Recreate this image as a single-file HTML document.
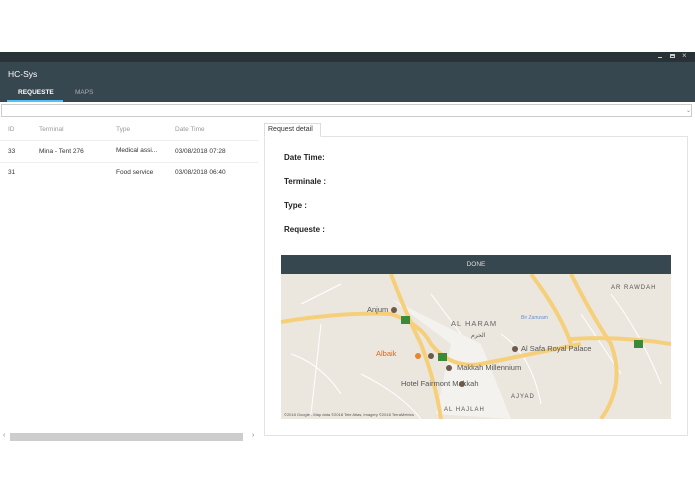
<!DOCTYPE html>
<html><head><style>
body{margin:0;width:695px;height:494px;background:#fff;font-family:"Liberation Sans",sans-serif;position:relative;overflow:hidden}
.a{position:absolute}
.lbl{font-size:8px;font-weight:bold;color:#222}
.th{font-size:6.5px;color:#999}
.td{font-size:6.5px;color:#333}
</style></head><body>
<div class="a" style="left:0;top:52px;width:695px;height:10px;background:#283237"></div>
<div class="a" style="left:658px;top:57px;width:4px;height:1px;background:#ccc"></div>
<div class="a" style="left:670px;top:54px;width:5px;height:4px;border:1px solid #ccc;border-top-width:2px;box-sizing:border-box"></div>
<div class="a" style="left:682px;top:51px;font-size:8px;color:#ccc">×</div>
<div class="a" style="left:0;top:62px;width:695px;height:40px;background:#37474f"></div>
<div class="a" style="left:8px;top:69px;font-size:8.5px;color:#fff">HC-Sys</div>
<div class="a" style="left:18px;top:89px;font-size:6.5px;color:#fff;font-weight:bold">REQUESTE</div>
<div class="a" style="left:75px;top:89px;font-size:6.5px;color:#aab">MAPS</div>
<div class="a" style="left:7px;top:100px;width:56px;height:2px;background:#4fc3f7"></div>
<div class="a" style="left:1px;top:104px;width:691px;height:13px;border:1px solid #ccc;box-sizing:border-box"></div>
<div class="a" style="left:686px;top:107px;font-size:6px;color:#888">⌄</div>
<div class="a th" style="left:8px;top:126px">ID</div>
<div class="a th" style="left:39px;top:126px">Terminal</div>
<div class="a th" style="left:116px;top:126px">Type</div>
<div class="a th" style="left:175px;top:126px">Date Time</div>
<div class="a" style="left:0;top:140px;width:258px;height:1px;background:#eee"></div>
<div class="a td" style="left:8px;top:148px">33</div>
<div class="a td" style="left:39px;top:148px">Mina - Tent 276</div>
<div class="a td" style="left:116px;top:147px">Medical assi...</div>
<div class="a td" style="left:175px;top:148px">03/08/2018 07:28</div>
<div class="a" style="left:0;top:162px;width:258px;height:1px;background:#eee"></div>
<div class="a td" style="left:8px;top:169px">31</div>
<div class="a td" style="left:116px;top:169px">Food service</div>
<div class="a td" style="left:175px;top:169px">03/08/2018 06:40</div>
<div class="a" style="left:3px;top:432px;font-size:7px;color:#777">‹</div>
<div class="a" style="left:10px;top:433px;width:233px;height:8px;background:#cdcdcd"></div>
<div class="a" style="left:252px;top:432px;font-size:7px;color:#777">›</div>
<div class="a" style="left:264px;top:136px;width:424px;height:300px;border:1px solid #e3e3e3;box-sizing:border-box"></div>
<div class="a" style="left:264px;top:123px;width:57px;height:14px;border:1px solid #ddd;border-bottom:1px solid #fff;background:#fff;box-sizing:border-box;font-size:7px;color:#333;padding:2px 0 0 3px">Request detail</div>
<div class="a lbl" style="left:284px;top:153px">Date Time:</div>
<div class="a lbl" style="left:284px;top:177px">Terminale :</div>
<div class="a lbl" style="left:284px;top:201px">Type :</div>
<div class="a lbl" style="left:284px;top:225px">Requeste :</div>
<div class="a" style="left:281px;top:255px;width:390px;height:19px;background:#37474f;color:#ddd;font-size:6.5px;text-align:center;line-height:19px">DONE</div>
<svg class="a" style="left:281px;top:274px" width="390" height="145" viewBox="0 0 390 145">
<rect width="390" height="145" fill="#ebe7df"/>
<g fill="none" stroke="#fff" stroke-width="1">
<path d="M20 30 L60 10 M10 80 Q40 90 60 120 M150 20 L180 60 M220 60 Q250 80 260 130 M300 40 L340 100 M330 20 Q360 60 380 110 M80 100 Q120 120 140 145 M40 50 L30 140"/>
</g>
<path d="M110 25 L170 70 L155 140 L230 145 L200 70" fill="#f4f2ee" stroke="none"/>
<g fill="none" stroke="#f6cf7a" stroke-width="4">
<path d="M0 48 Q60 38 110 40 Q140 50 150 70 Q170 95 200 90 Q250 80 300 70"/>
<path d="M110 0 Q125 40 140 70 Q155 110 160 145"/>
<path d="M290 0 Q310 40 330 70 Q345 110 320 145"/>
<path d="M250 0 Q280 40 290 70"/>
<path d="M290 65 Q340 62 390 70"/>
</g>
<g font-family="Liberation Sans,sans-serif" font-size="7.5" fill="#555">
<text x="86" y="38">Anjum</text>
<text x="170" y="52" fill="#666" letter-spacing="1">AL HARAM</text>
<text x="190" y="63" font-size="6">الحرم</text>
<text x="240" y="77">Al Safa Royal Palace</text>
<text x="95" y="82" fill="#d2691e">Albaik</text>
<text x="176" y="96">Makkah Millennium</text>
<text x="120" y="112">Hotel Fairmont Makkah</text>
<text x="230" y="124" font-size="6" letter-spacing="1">AJYAD</text>
<text x="163" y="137" font-size="6" letter-spacing="1">AL HAJLAH</text>
<text x="330" y="15" font-size="6" letter-spacing="1">AR RAWDAH</text>
<text x="240" y="45" font-size="5" fill="#6a8fcc">Bir Zamzam</text>
<text x="3" y="142" font-size="4">©2018 Google - Map data ©2018 Tele Atlas, Imagery ©2018 TerraMetrics</text>
</g>
<g fill="#3a8a3a"><rect x="120" y="42" width="9" height="8"/><rect x="157" y="79" width="9" height="8"/><rect x="353" y="66" width="9" height="8"/></g>
<g fill="#6d5a4a"><circle cx="113" cy="36" r="3"/><circle cx="150" cy="82" r="3"/><circle cx="168" cy="94" r="3"/><circle cx="234" cy="75" r="3"/><circle cx="181" cy="110" r="3"/></g>
<circle cx="137" cy="82" r="3" fill="#e8852e"/>
</svg>
</body></html>
